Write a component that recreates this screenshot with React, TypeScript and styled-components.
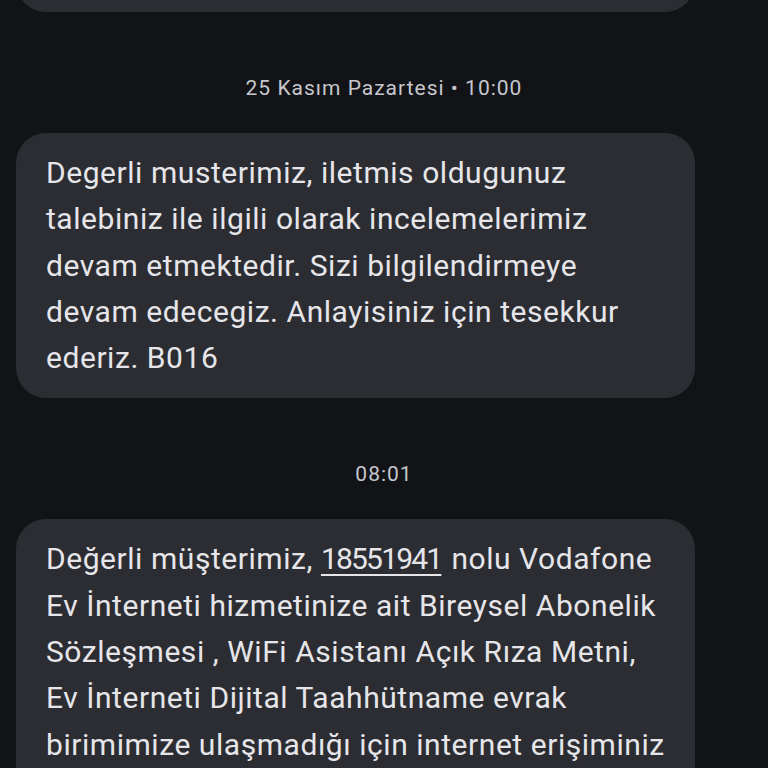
import React from "react";
import styled, { createGlobalStyle } from "styled-components";

const GlobalStyle = createGlobalStyle`
  html, body {
    margin: 0;
    padding: 0;
    background: #121317;
  }
  body {
    font-family: Roboto, "Noto Sans", "Liberation Sans", sans-serif;
    -webkit-font-smoothing: antialiased;
  }
`;

type Message = {
  time: string;
  parts: Array<string | { link: string }>;
};

const messages: Message[] = [
  {
    time: "25 Kasım Pazartesi • 10:00",
    parts: [
      "Degerli musterimiz, iletmis oldugunuz talebiniz ile ilgili olarak incelemelerimiz devam etmektedir. Sizi bilgilendirmeye devam edecegiz. Anlayisiniz için tesekkur ederiz. B016",
    ],
  },
  {
    time: "08:01",
    parts: [
      "Değerli müşterimiz, ",
      { link: "18551941" },
      " nolu Vodafone Ev İnterneti hizmetinize ait Bireysel Abonelik Sözleşmesi , WiFi Asistanı Açık Rıza Metni, Ev İnterneti Dijital Taahhütname evrak birimimize ulaşmadığı için internet erişiminiz kısıtlanacaktır. Detaylı bilgi için 542 numaralı Müşteri Hizmetleri'ni arayabilirsiniz.",
    ],
  },
];

const App = () => {
  return (
    <>
      <GlobalStyle />
      <Screen>
        <Thread>
          <Bubble $clipped />
          {messages.map((m) => (
            <React.Fragment key={m.time}>
              <TimeStamp>{m.time}</TimeStamp>
              <Bubble>
                {m.parts.map((p, i) =>
                  typeof p === "string" ? (
                    <React.Fragment key={i}>{p}</React.Fragment>
                  ) : (
                    <Link key={i}>{p.link}</Link>
                  )
                )}
              </Bubble>
            </React.Fragment>
          ))}
        </Thread>
      </Screen>
    </>
  );
};

export default App;

const Screen = styled.div`
  width: 768px;
  height: 768px;
  overflow: hidden;
  background: #121317;
`;

const Thread = styled.div`
  display: flex;
  flex-direction: column;
  align-items: flex-start;
  margin-top: -60px;
  padding: 0 16px;
`;

const Bubble = styled.div<{ $clipped?: boolean }>`
  box-sizing: border-box;
  width: 679px;
  min-height: ${(p) => (p.$clipped ? "72px" : "0")};
  background: #2c2d32;
  border-radius: 30px;
  padding: 17px 28px 17px 30px;
  color: #e6e6ea;
  font-size: 30px;
  line-height: 46.3px;
  letter-spacing: 0.55px;
`;

const TimeStamp = styled.div`
  align-self: center;
  margin: 62px 0 31px;
  color: #c6c7cc;
  font-size: 21px;
  line-height: 28px;
  letter-spacing: 1px;
`;

const Link = styled.span`
  letter-spacing: -1.8px;
  margin-right: 2px;
  text-decoration: underline;
  text-decoration-thickness: 2px;
  text-underline-offset: 5px;
`;
